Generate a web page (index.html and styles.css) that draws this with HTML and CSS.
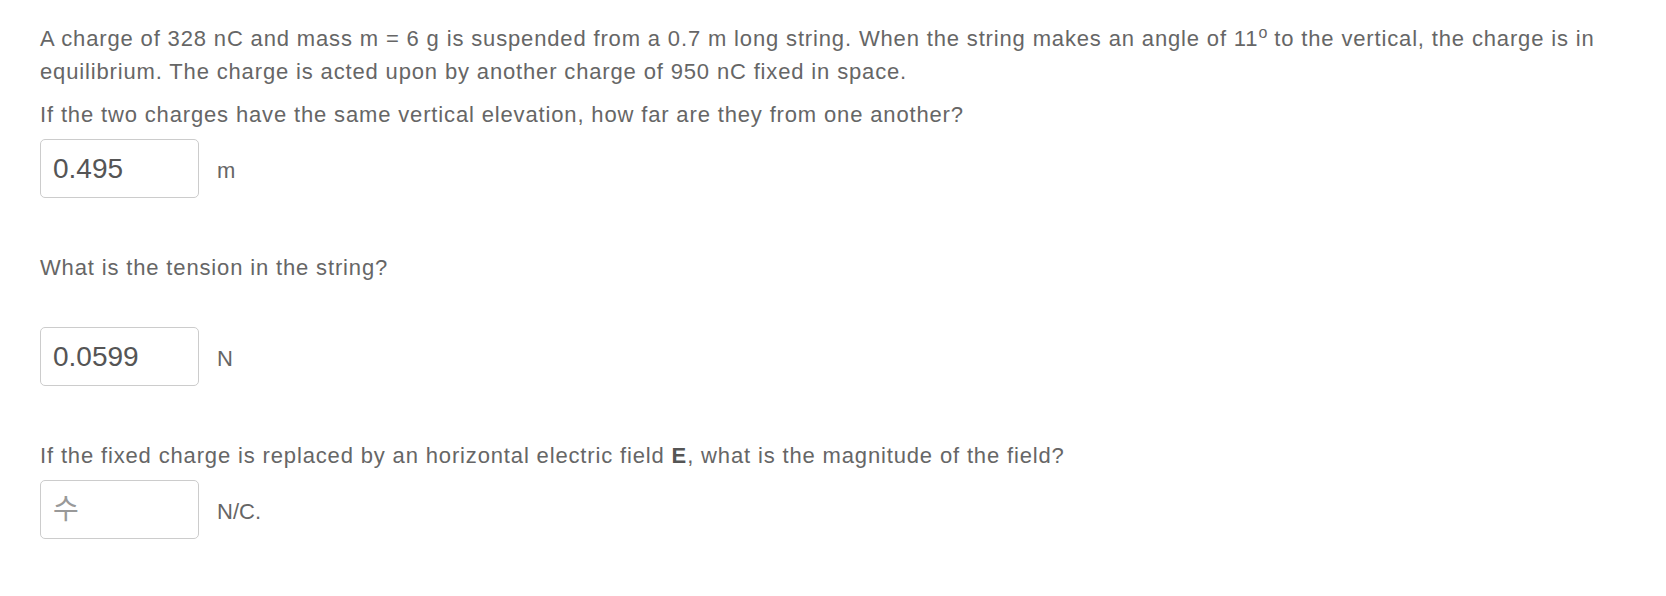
FILE: index.html
```html
<!DOCTYPE html>
<html lang="en">
<head>
<meta charset="utf-8">
<title>Charge problem</title>
<link rel="stylesheet" href="styles.css">
</head>
<body>
<main class="question">
  <p class="text">A charge of 328 nC and mass m = 6 g is suspended from a 0.7 m long string. When the string makes an angle of 11<sup>o</sup> to the vertical, the charge is in equilibrium. The charge is acted upon by another charge of 950 nC fixed in space.</p>
  <p class="text text-gap">If the two charges have the same vertical elevation, how far are they from one another?</p>
  <div class="answer">
    <input class="field" type="text" value="0.495" readonly>
    <span class="unit">m</span>
  </div>

  <p class="text part">What is the tension in the string?</p>
  <div class="answer answer-far">
    <input class="field" type="text" value="0.0599" readonly>
    <span class="unit">N</span>
  </div>

  <p class="text part">If the fixed charge is replaced by an horizontal electric field <b>E</b>, what is the magnitude of the field?</p>
  <div class="answer">
    <input class="field" type="text" placeholder="수">
    <span class="unit">N/C.</span>
  </div>
</main>
</body>
</html>
```

FILE: styles.css
```css
html, body {
  margin: 0;
  padding: 0;
  background: #ffffff;
}

.question {
  padding: 22px 40px 0 40px;
  font-family: "Liberation Sans", Arial, Helvetica, sans-serif;
  font-size: 22px;
  line-height: 33px;
  color: #666666;
}

.text {
  margin: 0;
  letter-spacing: 0.85px;
}

.text-gap {
  margin-top: 10px;
}

.text sup {
  font-size: 16px;
  line-height: 0;
  vertical-align: 8px;
  letter-spacing: 0;
}

.text b {
  color: #555555;
}

.part {
  margin-top: 53px;
}

.answer {
  display: flex;
  align-items: center;
  gap: 18px;
  margin-top: 8px;
}

.answer-far {
  margin-top: 43px;
}

.field {
  box-sizing: border-box;
  width: 159px;
  height: 59px;
  margin: 0;
  padding: 0 12px;
  border: 1px solid #cccccc;
  border-radius: 5px;
  background: #ffffff;
  font-family: "Liberation Sans", Arial, Helvetica, "Noto Sans CJK KR", sans-serif;
  font-size: 28px;
  color: #555555;
  outline: none;
}

.field::placeholder {
  color: #999999;
  opacity: 1;
}

.unit {
  padding-top: 4px;
}
```
